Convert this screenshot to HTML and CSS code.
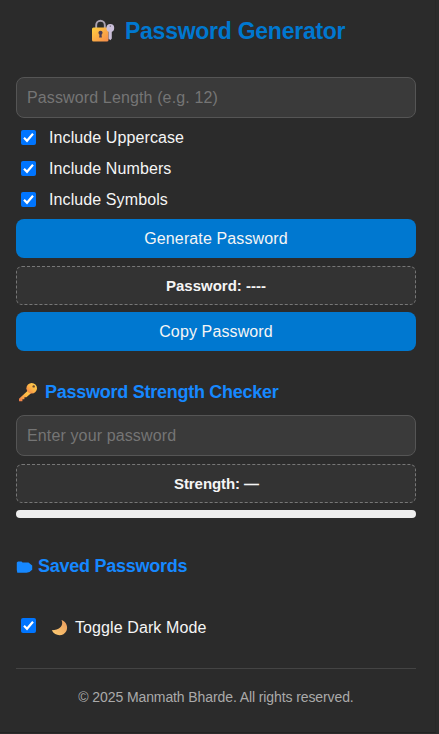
FILE: index.html
```html
<!DOCTYPE html>
<html lang="en">
<head>
<meta charset="utf-8">
<title>Password Generator</title>
<link rel="stylesheet" href="styles.css">
</head>
<body>
<svg width="0" height="0" class="defs" aria-hidden="true">
  <defs>
    <linearGradient id="gold" x1="0" y1="0" x2="1" y2="1"><stop offset="0" stop-color="#ffcf3f"/><stop offset="1" stop-color="#f58a4b"/></linearGradient>
    <linearGradient id="keygold" x1="1" y1="0" x2="0" y2="1"><stop offset="0" stop-color="#ffd44f"/><stop offset=".5" stop-color="#fdb546"/><stop offset="1" stop-color="#f0784a"/></linearGradient>
    <linearGradient id="moon" x1="1" y1="0" x2="0" y2="1"><stop offset="0" stop-color="#e89a5c"/><stop offset="1" stop-color="#ffce73"/></linearGradient>
    <symbol id="tick" viewBox="0 0 15 15"><path d="M3 7.8 6 10.8 12 3.8" fill="none" stroke="#fff" stroke-width="2.2"/></symbol>
  </defs>
</svg>
<main class="card">
  <h1 class="title">
    <svg class="lock" viewBox="0 0 24 24"><path d="M5.2 10V6a4.3 4.3 0 0 1 8.6 0v4" fill="none" stroke="#aaa2b1" stroke-width="1.9"/><rect x="1" y="8.5" width="16.5" height="14" rx="1.6" fill="url(#gold)"/><circle cx="9.5" cy="13.8" r="2.1" fill="#493b54"/><path d="M8.7 14h1.6l.6 4.5H8.1z" fill="#493b54"/><circle cx="19.3" cy="9" r="3.9" fill="#cbbfd9"/><path d="M17.6 11h3.2v8.6l-1.4 1.6-1.8-1.5z" fill="#cbbfd9"/><circle cx="19.3" cy="7.1" r=".7" fill="#62556b"/></svg>
    <span>Password Generator</span>
  </h1>
  <input class="field" type="text" placeholder="Password Length (e.g. 12)">
  <label class="option"><svg class="box"><use href="#tick"/></svg><span>Include Uppercase</span></label>
  <label class="option"><svg class="box"><use href="#tick"/></svg><span>Include Numbers</span></label>
  <label class="option"><svg class="box"><use href="#tick"/></svg><span>Include Symbols</span></label>
  <button class="button">Generate Password</button>
  <div class="output">Password: ----</div>
  <button class="button">Copy Password</button>
  <h2 class="heading">
    <svg class="key" viewBox="0 0 20 20"><path d="M11.3 7.2 1 16.7v2.5h3.4v-2h2v-2h2l4.6-4z" fill="url(#keygold)"/><circle cx="13.7" cy="6.3" r="5.3" fill="url(#keygold)"/><circle cx="15.7" cy="4.4" r="1.2" fill="#6b4930"/></svg>
    <span>Password Strength Checker</span>
  </h2>
  <input class="field" type="text" placeholder="Enter your password">
  <div class="output strength">Strength: —</div>
  <div class="meter"></div>
  <h2 class="heading saved">
    <svg class="folder" viewBox="0 0 16 12"><path d="M.3 1.5 1.5.5H5l1 1h6l3.7 3v4.2L13 11l-3 .7H.8L.3 9z" fill="#1688ff"/></svg>
    <span>Saved Passwords</span>
  </h2>
  <label class="option toggle">
    <svg class="box"><use href="#tick"/></svg>
    <svg class="moon" viewBox="0 0 17 17"><path d="M10.5 1c2 4.4 0 9.8-9.7 10.2C4 17.5 12.4 17.8 15.4 11.9 17.3 7.4 15.1 2.6 10.5 1z" fill="url(#moon)"/></svg>
    <span>Toggle Dark Mode</span>
  </label>
  <footer class="footer">© 2025 Manmath Bharde. All rights reserved.</footer>
</main>
</body>
</html>
```
FILE: styles.css
```css
* { box-sizing: border-box; }
body {
  margin: 0;
  background: #2b2b2b;
  color: #f5f5f5;
  font-family: "Liberation Sans", Arial, sans-serif;
  font-size: 16px;
}
.defs { position: absolute; }
.card {
  width: 436px;
  height: 733px;
  padding: 16px 19px 0 16px;
  border-right: 1px solid #282828;
  border-bottom: 1px solid #222;
  overflow: hidden;
}
.title {
  display: flex;
  align-items: center;
  height: 30px;
  margin: 0 0 31px 75px;
  color: #0078d0;
  font-size: 23px;
  letter-spacing: -0.26px;
  white-space: nowrap;
}
.lock { width: 24px; height: 24px; margin-right: 10px; }
.field {
  display: block;
  width: 400px;
  height: 41px;
  padding: 0 10px;
  border: 1px solid #555;
  border-radius: 8px;
  background: #3a3a3a;
  color: #f5f5f5;
  font: inherit;
  letter-spacing: 0.13px;
}
.field::placeholder { color: #757575; opacity: 1; }
.option {
  display: flex;
  align-items: center;
  height: 31px;
  padding-left: 5px;
  letter-spacing: 0.1px;
}
.field + .option { margin-top: 4px; }
.box {
  width: 15px;
  height: 15px;
  margin-right: 13px;
  border-radius: 2px;
  background: #0075ff;
}
.button {
  display: block;
  width: 400px;
  height: 39px;
  padding: 0;
  border: 0;
  border-radius: 8px;
  background: #0078d0;
  color: #f5f5f5;
  font: inherit;
  letter-spacing: 0.12px;
}
.option + .button { margin-top: 4px; }
.output {
  height: 39px;
  margin: 8px 0 7px;
  border: 1px dashed #777;
  border-radius: 6px;
  background: #333;
  font-size: 15px;
  font-weight: bold;
  line-height: 37px;
  text-align: center;
}
.strength { padding-left: 1px; letter-spacing: -0.08px; }
.heading {
  display: flex;
  align-items: center;
  height: 24px;
  margin: 29px 0 11px;
  color: #1688ff;
  font-size: 18px;
  letter-spacing: -0.26px;
}
.key { width: 20px; height: 20px; margin: 0 7px 0 2px; }
.meter {
  height: 8px;
  border-radius: 4px;
  background: #eee;
}
.saved { margin: 36px 0 34px; }
.folder { width: 17px; height: 12px; margin: 2px 5px 0 0; }
.toggle { height: 31px; }
.toggle .box { margin: 0 15px 4px 0; }
.moon { width: 17px; height: 17px; margin-right: 7px; }
.footer {
  height: 60px;
  margin-top: 25px;
  border-top: 1px solid #444;
  color: #aaa;
  font-size: 14px;
  letter-spacing: -0.1px;
  line-height: 57px;
  text-align: center;
}
```
